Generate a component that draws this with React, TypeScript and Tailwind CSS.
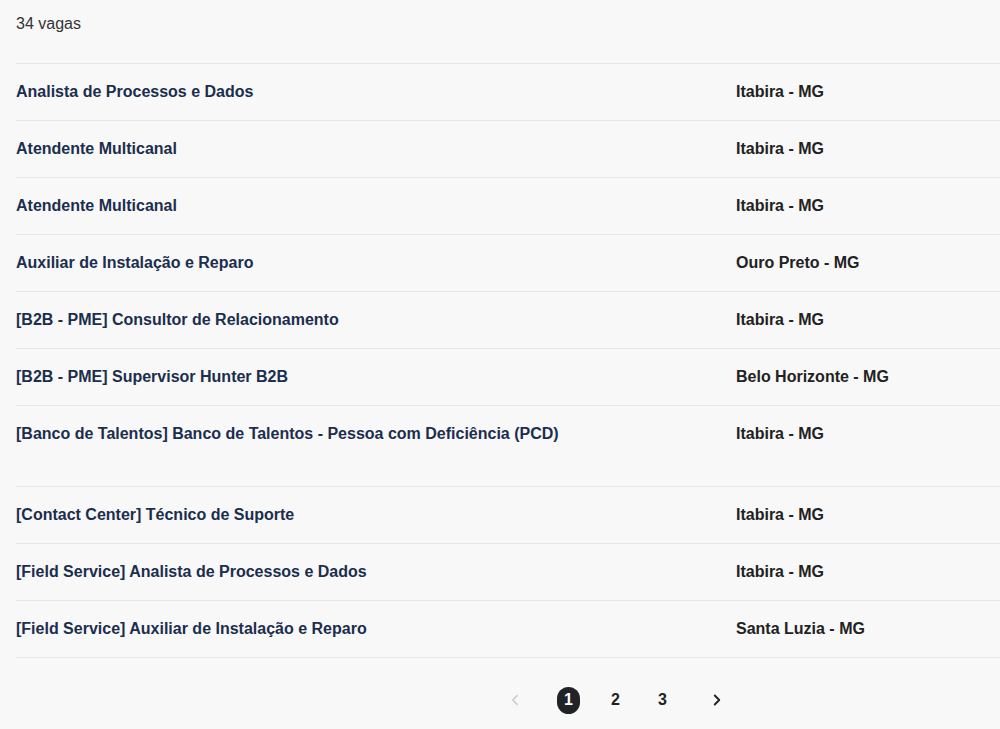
import React from 'react';
import { ChevronLeft, ChevronRight } from 'lucide-react';

const jobs = [
  { title: 'Analista de Processos e Dados', city: 'Itabira - MG' },
  { title: 'Atendente Multicanal', city: 'Itabira - MG' },
  { title: 'Atendente Multicanal', city: 'Itabira - MG' },
  { title: 'Auxiliar de Instalação e Reparo', city: 'Ouro Preto - MG' },
  { title: '[B2B - PME] Consultor de Relacionamento', city: 'Itabira - MG' },
  { title: '[B2B - PME] Supervisor Hunter B2B', city: 'Belo Horizonte - MG' },
  { title: '[Banco de Talentos] Banco de Talentos - Pessoa com Deficiência (PCD)', city: 'Itabira - MG', tall: true },
  { title: '[Contact Center] Técnico de Suporte', city: 'Itabira - MG' },
  { title: '[Field Service] Analista de Processos e Dados', city: 'Itabira - MG' },
  { title: '[Field Service] Auxiliar de Instalação e Reparo', city: 'Santa Luzia - MG' },
];

const App = () => {
  return (
    <div className="min-h-[729px] overflow-hidden bg-[#f8f8f8] pl-4 font-['Liberation_Sans',Arial,sans-serif]">
      <p className="pt-[15px] pb-[30px] text-base leading-[18px] text-[#333]">34 vagas</p>

      <ul className="border-t border-[#e6e6e6]">
        {jobs.map((job, i) => (
          <li
            key={i}
            className={`flex border-b border-[#e6e6e6] ${job.tall ? 'h-[81px] pt-[18px]' : 'h-[57px] items-center'}`}
          >
            <a className="w-[720px] text-base font-bold leading-5 text-[#1b2e4e]">{job.title}</a>
            <span className="text-base font-bold leading-5 text-[#222]">{job.city}</span>
          </li>
        ))}
      </ul>

      <nav className="flex items-center pt-7 pl-[475px]">
        <button className="mr-[7px] flex h-7 w-[47px] items-center justify-center text-[#c8c8c8]">
          <ChevronLeft className="h-[18px] w-[18px]" strokeWidth={2} />
        </button>
        <button className="flex h-7 w-[47px] items-center justify-center">
          <span className="flex h-[27px] w-[23px] items-center justify-center rounded-full bg-[#222327] text-base font-bold text-white">1</span>
        </button>
        <button className="flex h-7 w-[47px] items-center justify-center text-base font-bold text-[#222]">2</button>
        <button className="flex h-7 w-[47px] items-center justify-center text-base font-bold text-[#222]">3</button>
        <button className="ml-[7px] flex h-7 w-[47px] items-center justify-center text-[#222]">
          <ChevronRight className="h-[18px] w-[18px]" strokeWidth={2.5} />
        </button>
      </nav>
    </div>
  );
};

export default App;
